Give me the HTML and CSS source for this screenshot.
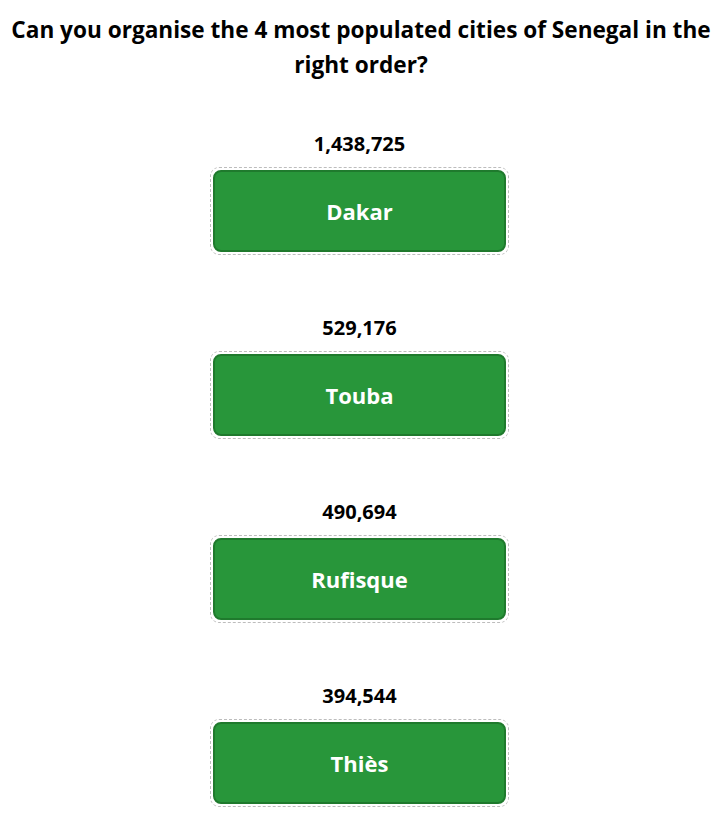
FILE: index.html
```html
<!DOCTYPE html>
<html lang="en">
  <head>
    <meta charset="UTF-8" />
    <meta name="viewport" content="width=device-width, initial-scale=1.0" />
    <title>City Order Quiz</title>
    <link rel="stylesheet" href="styles.css">
  </head>

  <body>
    <h1 class="question">
      Can you organise the 4 most populated cities of Senegal in the right order?
    </h1>

    <div class="cities">
      <div class="city">
        <p class="population">1,438,725</p>
        <div class="slot">
          <div class="city_btn">Dakar</div>
        </div>
      </div>

      <div class="city">
        <p class="population">529,176</p>
        <div class="slot">
          <div class="city_btn">Touba</div>
        </div>
      </div>

      <div class="city">
        <p class="population">490,694</p>
        <div class="slot">
          <div class="city_btn">Rufisque</div>
        </div>
      </div>

      <div class="city">
        <p class="population">394,544</p>
        <div class="slot">
          <div class="city_btn">Thiès</div>
        </div>
      </div>
    </div>
  </body>
</html>
```

FILE: styles.css
```css
html,
body {
  margin: 0;
  padding: 0;
  background-color: #fff;
  color: #000;
  font-family: "Open Sans", "Noto Sans", sans-serif;
}

body {
  padding: 8px;
}

.question {
  margin: 4px 0 0;
  font-size: 22.6px;
  line-height: 35px;
  font-weight: 700;
  text-align: center;
}

.cities {
  display: flex;
  flex-direction: column;
  align-items: center;
  margin-top: 50px;
}

.city {
  display: flex;
  flex-direction: column;
  align-items: center;
  margin-bottom: 61px;
  margin-right: 3px;
}

.population {
  margin: 0 0 11px;
  font-size: 20px;
  line-height: 24px;
  font-weight: 700;
}

.slot {
  width: 293px;
  padding: 2px;
  border: 1px dashed #bdbdbd;
  border-radius: 9px;
}

.city_btn {
  height: 78px;
  display: flex;
  justify-content: center;
  align-items: center;
  border: 2px solid #1f7a2d;
  border-radius: 8px;
  background-color: #28963a;
  color: #fff;
  font-size: 22px;
  font-weight: 700;
}
```
